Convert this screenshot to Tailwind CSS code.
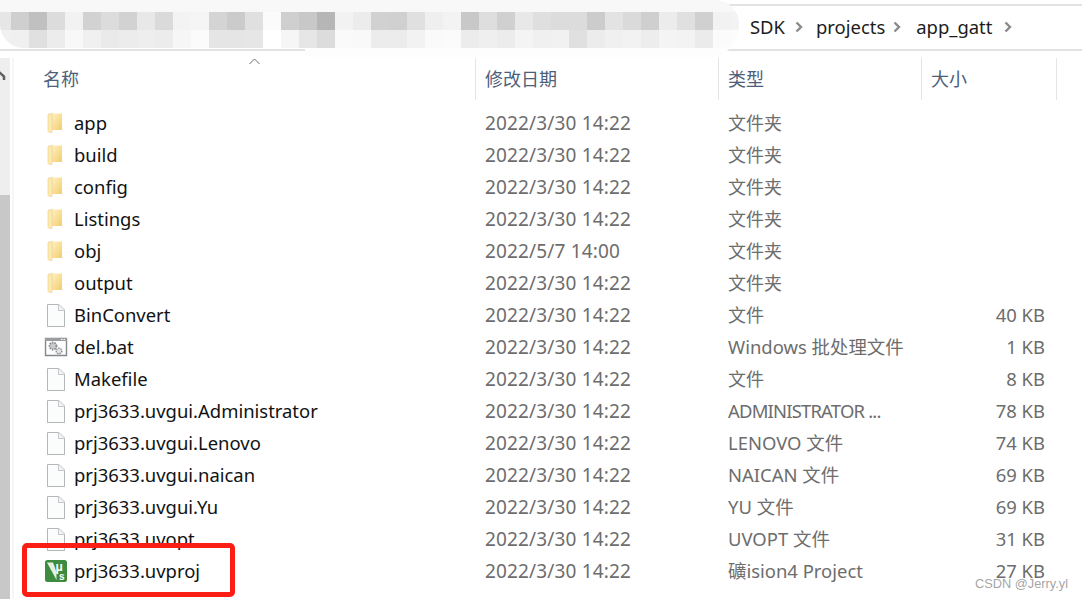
<!DOCTYPE html>
<html>
<head>
    <meta charset="UTF-8">
    <meta name="viewport" content="width=device-width, initial-scale=1.0">
    <title>app_gatt</title>
    <script src="https://cdn.jsdelivr.net/npm/@tailwindcss/browser@4"></script>
</head>
<body class="bg-white h-[599px] w-[1082px] overflow-hidden relative font-['Noto_Sans','Noto_Sans_CJK_SC',sans-serif] text-[18.45px]">
    <svg class="absolute w-0 h-0">
        <defs>
            <linearGradient id="folderBody" x1="0" y1="0" x2="1" y2="1">
                <stop offset="0" stop-color="#fdf1c0"/>
                <stop offset="1" stop-color="#f4cd6e"/>
            </linearGradient>
            <symbol id="folder" viewBox="0 0 24 24">
                <path d="M8 2.500h10V19H8z" fill="url(#folderBody)"/>
                <path d="M4 3.500L8 2v20l-4-1.500z" fill="#fcebb0" stroke="#e9cf8a" stroke-width=".6"/>
            </symbol>
            <symbol id="file" viewBox="0 0 24 24">
                <path d="M3.500 1.500H15L20.500 7v16.500h-17z" fill="#fbfcfc" stroke="#b4b7ba"/>
                <path d="M14.500 1.500V7.500h6" fill="#f1f2f3" stroke="#c4c6c8"/>
            </symbol>
            <symbol id="bat" viewBox="0 0 24 24">
                <path d="M1.500 3.500h21v17h-21z" fill="#fdfdfd" stroke="#85888b" stroke-width="1.400"/>
                <path d="M1 3h22v3H1z" fill="#9a9da0"/>
                <path d="M17 4h1.500v1H17zM19.500 4H21v1h-1.500z" fill="#fff"/>
                <circle cx="9" cy="11" r="3.500" fill="#c9cbcd" stroke="#85888b" stroke-width="1.800" stroke-dasharray="1.500 1"/>
                <circle cx="15" cy="16" r="2.800" fill="#e3e5e6" stroke="#8f9295" stroke-width="1.500" stroke-dasharray="1.500 .9"/>
            </symbol>
            <symbol id="uvision" viewBox="0 0 24 24">
                <rect x="1" y="1" width="22" height="22" rx="2.500" fill="#3d8b3f"/>
                <path d="M3 3.500h6l3.500 9.500v8z" fill="#e4efe0"/>
                <text x="11.500" y="11.500" font-size="12" font-weight="700" fill="#fff" font-family="Liberation Sans">μ</text>
                <text x="15" y="21" font-size="10" font-weight="700" fill="#fff" font-family="Liberation Sans">s</text>
            </symbol>
        </defs>
    </svg>

    <!-- address bar -->
    <header class="h-[47px] mt-[4px] pb-[2px] border-y-2 border-[#e3e3e3] flex items-center pl-[750px] text-[#1c1c1c]">
        <span>SDK</span>
        <svg class="w-2 h-3 ml-[10px] mr-[13px]" viewBox="0 0 8 12"><path d="M1.500 1.500L6 6l-4.500 4.500" fill="none" stroke="#8a8a8a" stroke-width="2.400"/></svg>
        <span>projects</span>
        <svg class="w-2 h-3 ml-[8px] mr-[15px]" viewBox="0 0 8 12"><path d="M1.500 1.500L6 6l-4.500 4.500" fill="none" stroke="#8a8a8a" stroke-width="2.400"/></svg>
        <span>app_gatt</span>
        <svg class="w-2 h-3 ml-[12px]" viewBox="0 0 8 12"><path d="M1.500 1.500L6 6l-4.500 4.500" fill="none" stroke="#8a8a8a" stroke-width="2.400"/></svg>
    </header>

    <!-- blurred part of the path -->
    <div class="absolute left-[305px] top-0 w-[433px] h-[57px] bg-[#fdfdfd] rounded-br-[30px] rounded-tr-[30px]"></div>
    <div class="absolute left-0 top-0 w-[739px] h-[48px] bg-[#f8f8f8] rounded-bl-[26px] rounded-r-[26px] overflow-hidden pt-3">
        <div class="flex h-[18px]">
            <div class="w-[11px] bg-[#e6e6e6]"></div><div class="w-[18px] bg-[#cfcfcf]"></div><div class="w-[18px] bg-[#c0c0c0]"></div><div class="w-[18px] bg-[#dcdcdc]"></div><div class="w-[18px] bg-[#f2f2f2]"></div><div class="w-[18px] bg-[#d2d2d2]"></div><div class="w-[18px] bg-[#dcdcdc]"></div><div class="w-[18px] bg-[#d2d2d2]"></div><div class="w-[18px] bg-[#e8e8e8]"></div><div class="w-[18px] bg-[#dadada]"></div><div class="w-[18px] bg-[#f3f3f3]"></div><div class="w-[18px] bg-[#f5f5f5]"></div><div class="w-[18px] bg-[#d4d4d4]"></div><div class="w-[18px] bg-[#cbcbcb]"></div><div class="w-[18px] bg-[#e0e0e0]"></div><div class="w-[18px] bg-[#fbfbfb]"></div><div class="w-[18px] bg-[#cfcfcf]"></div><div class="w-[18px] bg-[#c8c8c8]"></div><div class="w-[18px] bg-[#b6b6b6]"></div><div class="w-[18px] bg-[#f2f2f2]"></div><div class="w-[18px] bg-[#ececec]"></div><div class="w-[18px] bg-[#d1d1d1]"></div><div class="w-[18px] bg-[#d0d0d0]"></div><div class="w-[18px] bg-[#e0e0e0]"></div><div class="w-[18px] bg-[#efefef]"></div><div class="w-[18px] bg-[#f3f3f3]"></div><div class="w-[18px] bg-[#c8c8c8]"></div><div class="w-[18px] bg-[#dedede]"></div><div class="w-[18px] bg-[#d0d0d0]"></div><div class="w-[18px] bg-[#e8e8e8]"></div><div class="w-[18px] bg-[#dfdfdf]"></div><div class="w-[18px] bg-[#dcdcdc]"></div><div class="w-[18px] bg-[#dcdcdc]"></div><div class="w-[18px] bg-[#cccccc]"></div><div class="w-[18px] bg-[#e3e3e3]"></div><div class="w-[18px] bg-[#dadada]"></div><div class="w-[18px] bg-[#cfcfcf]"></div><div class="w-[18px] bg-[#ececec]"></div><div class="w-[18px] bg-[#e0e0e0]"></div><div class="w-[18px] bg-[#d0d0d0]"></div><div class="w-[18px] bg-[#f2f2f2]"></div><div class="w-[8px] bg-[#f3f3f3]"></div>
        </div>
        <div class="flex h-[18px]">
            <div class="w-[11px] bg-[#f1f1f1]"></div><div class="w-[18px] bg-[#f0f0f0]"></div><div class="w-[18px] bg-[#e0e0e0]"></div><div class="w-[18px] bg-[#ececec]"></div><div class="w-[18px] bg-[#f8f8f8]"></div><div class="w-[18px] bg-[#f0f0f0]"></div><div class="w-[18px] bg-[#eaeaea]"></div><div class="w-[18px] bg-[#ececec]"></div><div class="w-[18px] bg-[#eeeeee]"></div><div class="w-[18px] bg-[#ececec]"></div><div class="w-[18px] bg-[#f6f6f6]"></div><div class="w-[18px] bg-[#fbfbfb]"></div><div class="w-[18px] bg-[#e5e5e5]"></div><div class="w-[18px] bg-[#e5e5e5]"></div><div class="w-[18px] bg-[#e6e6e6]"></div><div class="w-[18px] bg-[#ffffff]"></div><div class="w-[18px] bg-[#f6f6f6]"></div><div class="w-[18px] bg-[#e6e6e6]"></div><div class="w-[18px] bg-[#dcdcdc]"></div><div class="w-[18px] bg-[#fafafa]"></div><div class="w-[18px] bg-[#f9f9f9]"></div><div class="w-[18px] bg-[#ececec]"></div><div class="w-[18px] bg-[#ececec]"></div><div class="w-[18px] bg-[#f2f2f2]"></div><div class="w-[18px] bg-[#fafafa]"></div><div class="w-[18px] bg-[#fbfbfb]"></div><div class="w-[18px] bg-[#ececec]"></div><div class="w-[18px] bg-[#efefef]"></div><div class="w-[18px] bg-[#ececec]"></div><div class="w-[18px] bg-[#f4f4f4]"></div><div class="w-[18px] bg-[#f0f0f0]"></div><div class="w-[18px] bg-[#f1f1f1]"></div><div class="w-[18px] bg-[#e0e0e0]"></div><div class="w-[18px] bg-[#ececec]"></div><div class="w-[18px] bg-[#f0f0f0]"></div><div class="w-[18px] bg-[#f2f2f2]"></div><div class="w-[18px] bg-[#ededed]"></div><div class="w-[18px] bg-[#f4f4f4]"></div><div class="w-[18px] bg-[#f3f3f3]"></div><div class="w-[18px] bg-[#ebebeb]"></div><div class="w-[18px] bg-[#fbfbfb]"></div><div class="w-[8px] bg-[#fcfcfc]"></div>
        </div>
    </div>

    <main class="flex mt-[7px] h-[541px]">
        <!-- scrollbar -->
        <div class="w-[14px] flex shrink-0">
            <div class="w-[10px] flex flex-col bg-[#eeeeee]">
                <svg class="w-[10px] h-[10px] mt-[12px] shrink-0" viewBox="0 0 10 10"><path d="M-2 1l6 5.500V10" fill="none" stroke="#606060" stroke-width="2.500"/></svg>
                <div class="mt-[115px] flex-1 bg-[#c8c8c8]"></div>
            </div>
            <div class="w-[2px]"></div>
            <div class="w-[2px] bg-[#f6f6f6]"></div>
        </div>

        <div class="flex-1 relative">
            <svg class="absolute left-[235px] top-0 w-[11px] h-[7px]" viewBox="0 0 11 7"><path d="M.500 6L5.500 1l5 5" fill="none" stroke="#6a6a6a"/></svg>

            <!-- column headers -->
            <div class="grid grid-cols-[461px_243px_203px_136px] h-[40px] leading-[42px] text-[18px] text-[#4c607a]">
                <div class="pl-[29px]">名称</div>
                <div class="pl-[9px] border-l border-[#e5e5e5]">修改日期</div>
                <div class="pl-[9px] border-l border-[#e5e5e5]">类型</div>
                <div class="pl-[9px] border-x border-[#e5e5e5]">大小</div>
            </div>

            <!-- file rows -->
            <div class="grid grid-cols-[461px_243px_203px_135px] auto-rows-[32px] leading-[32px] mt-[9px] text-[#6d6d6d]">
                <div class="flex items-center pl-[30px] text-[#121212]"><svg class="w-6 h-6 mr-[6px]"><use href="#folder"/></svg>app</div>
                <div class="pl-[10px] text-[19px] tracking-[.15px]">2022/3/30 14:22</div><div class="pl-[10px] text-[18px]">文件夹</div><div></div>

                <div class="flex items-center pl-[30px] text-[#121212]"><svg class="w-6 h-6 mr-[6px]"><use href="#folder"/></svg>build</div>
                <div class="pl-[10px] text-[19px] tracking-[.15px]">2022/3/30 14:22</div><div class="pl-[10px] text-[18px]">文件夹</div><div></div>

                <div class="flex items-center pl-[30px] text-[#121212]"><svg class="w-6 h-6 mr-[6px]"><use href="#folder"/></svg>config</div>
                <div class="pl-[10px] text-[19px] tracking-[.15px]">2022/3/30 14:22</div><div class="pl-[10px] text-[18px]">文件夹</div><div></div>

                <div class="flex items-center pl-[30px] text-[#121212]"><svg class="w-6 h-6 mr-[6px]"><use href="#folder"/></svg>Listings</div>
                <div class="pl-[10px] text-[19px] tracking-[.15px]">2022/3/30 14:22</div><div class="pl-[10px] text-[18px]">文件夹</div><div></div>

                <div class="flex items-center pl-[30px] text-[#121212]"><svg class="w-6 h-6 mr-[6px]"><use href="#folder"/></svg>obj</div>
                <div class="pl-[10px] text-[19px] tracking-[.15px]">2022/5/7 14:00</div><div class="pl-[10px] text-[18px]">文件夹</div><div></div>

                <div class="flex items-center pl-[30px] text-[#121212]"><svg class="w-6 h-6 mr-[6px]"><use href="#folder"/></svg>output</div>
                <div class="pl-[10px] text-[19px] tracking-[.15px]">2022/3/30 14:22</div><div class="pl-[10px] text-[18px]">文件夹</div><div></div>

                <div class="flex items-center pl-[30px] text-[#121212]"><svg class="w-6 h-6 mr-[6px]"><use href="#file"/></svg>BinConvert</div>
                <div class="pl-[10px] text-[19px] tracking-[.15px]">2022/3/30 14:22</div><div class="pl-[10px] text-[18px]">文件</div><div class="text-right pr-[11px]">40 KB</div>

                <div class="flex items-center pl-[30px] text-[#121212]"><svg class="w-6 h-6 mr-[6px]"><use href="#bat"/></svg>del.bat</div>
                <div class="pl-[10px] text-[19px] tracking-[.15px]">2022/3/30 14:22</div><div class="pl-[10px]">Windows 批处理文件</div><div class="text-right pr-[11px]">1 KB</div>

                <div class="flex items-center pl-[30px] text-[#121212]"><svg class="w-6 h-6 mr-[6px]"><use href="#file"/></svg>Makefile</div>
                <div class="pl-[10px] text-[19px] tracking-[.15px]">2022/3/30 14:22</div><div class="pl-[10px] text-[18px]">文件</div><div class="text-right pr-[11px]">8 KB</div>

                <div class="flex items-center pl-[30px] text-[#121212]"><svg class="w-6 h-6 mr-[6px]"><use href="#file"/></svg>prj3633.uvgui.Administrator</div>
                <div class="pl-[10px] text-[19px] tracking-[.15px]">2022/3/30 14:22</div><div class="pl-[10px] tracking-[-.8px]">ADMINISTRATOR ...</div><div class="text-right pr-[11px]">78 KB</div>

                <div class="flex items-center pl-[30px] text-[#121212]"><svg class="w-6 h-6 mr-[6px]"><use href="#file"/></svg>prj3633.uvgui.Lenovo</div>
                <div class="pl-[10px] text-[19px] tracking-[.15px]">2022/3/30 14:22</div><div class="pl-[10px]">LENOVO 文件</div><div class="text-right pr-[11px]">74 KB</div>

                <div class="flex items-center pl-[30px] text-[#121212]"><svg class="w-6 h-6 mr-[6px]"><use href="#file"/></svg>prj3633.uvgui.naican</div>
                <div class="pl-[10px] text-[19px] tracking-[.15px]">2022/3/30 14:22</div><div class="pl-[10px]">NAICAN 文件</div><div class="text-right pr-[11px]">69 KB</div>

                <div class="flex items-center pl-[30px] text-[#121212]"><svg class="w-6 h-6 mr-[6px]"><use href="#file"/></svg>prj3633.uvgui.Yu</div>
                <div class="pl-[10px] text-[19px] tracking-[.15px]">2022/3/30 14:22</div><div class="pl-[10px]">YU 文件</div><div class="text-right pr-[11px]">69 KB</div>

                <div class="flex items-center pl-[30px] text-[#121212]"><svg class="w-6 h-6 mr-[6px]"><use href="#file"/></svg>prj3633.uvopt</div>
                <div class="pl-[10px] text-[19px] tracking-[.15px]">2022/3/30 14:22</div><div class="pl-[10px]">UVOPT 文件</div><div class="text-right pr-[11px]">31 KB</div>

                <div class="flex items-center pl-[30px] text-[#121212]"><svg class="w-6 h-6 mr-[6px]"><use href="#uvision"/></svg>prj3633.uvproj</div>
                <div class="pl-[10px] text-[19px] tracking-[.15px]">2022/3/30 14:22</div><div class="pl-[10px]">礦ision4 Project</div><div class="text-right pr-[11px]">27 KB</div>
            </div>
        </div>
    </main>

    <!-- annotation drawn over the screenshot -->
    <div class="absolute left-[22px] top-[543px] w-[213px] h-[54px] border-[5px] border-[#fa1e14] rounded-[5px]"></div>
    <div class="absolute left-[975px] top-[576px] text-[12.8px] leading-[16px] font-['Liberation_Sans',sans-serif] text-[#8c8c8c]/80">CSDN @Jerry.yl</div>
</body>
</html>
